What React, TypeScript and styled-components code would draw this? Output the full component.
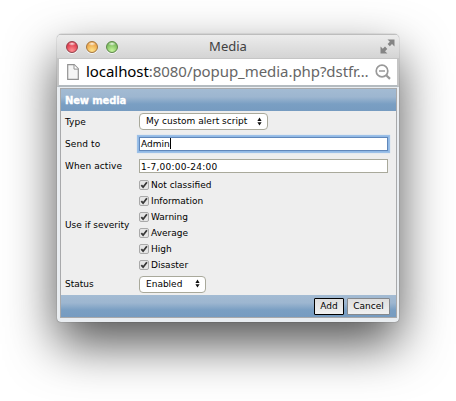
import React from "react";
import styled, { createGlobalStyle } from "styled-components";

const GlobalStyle = createGlobalStyle`
  * { box-sizing: border-box; }
  body { margin: 0; background: #fff; overflow: hidden; }
`;

const Desktop = styled.main`
  width: 456px;
  height: 401px;
  padding: 34px 0 0 57px;
  overflow: hidden;
  background: #fff;
  color: #000;
  font: 9px/16px "DejaVu Sans", Verdana, sans-serif;
`;

const Window = styled.section`
  display: flex;
  flex-direction: column;
  width: 342px;
  height: 288px;
  border-radius: 5px 5px 4px 4px;
  overflow: hidden;
  background: #e9edf1;
  box-shadow: 0 0 1px rgba(0, 0, 0, 0.65), 0 22px 50px rgba(0, 0, 0, 0.68);
`;

const TitleBar = styled.header`
  display: grid;
  grid-template-columns: 72px 1fr 72px;
  align-items: center;
  height: 24px;
  flex: none;
  padding: 0 4px 0 9px;
  border-top: 1px solid #bdbdbd;
  background: linear-gradient(#ececec, #d4d4d4);
`;

const Lights = styled.div`
  display: flex;
  gap: 8px;
`;

const Light = styled.i<{ $edge: string; $mid: string; $glow: string }>`
  width: 12px;
  height: 12px;
  border-radius: 50%;
  border: 1px solid ${(p) => p.$edge};
  background:
    radial-gradient(ellipse 4px 2px at 50% 18%, #fffd, #fff0),
    radial-gradient(circle at 50% 85%, ${(p) => p.$glow}, ${(p) => p.$mid} 75%);
  box-shadow: 0 1px 0 #f6f6f6;
`;

const Title = styled.h1`
  margin: 0 5px 2px 0;
  text-align: center;
  font: 13px/20px "Noto Sans", sans-serif;
  color: #414141;
`;

const ExpandIcon = styled.svg`
  justify-self: end;
  width: 15px;
  height: 15px;
`;

const AddressBar = styled.div`
  display: flex;
  align-items: center;
  flex: none;
  height: 29px;
  padding: 0 6px 0 8px;
  border: solid #c5c5c5;
  border-width: 1px 2px 2px;
  border-bottom-color: #b4bbc0;
  background: #fff;

  svg {
    flex: none;
  }
`;

const Url = styled.div`
  flex: 1;
  min-width: 0;
  margin: 0 0 2px 7px;
  white-space: nowrap;
  font: 15px/24px "Noto Sans", sans-serif;
  letter-spacing: -0.06px;
  color: #666;
`;

const Host = styled.span`
  color: #000;
`;

const Form = styled.form`
  display: flex;
  flex-direction: column;
  width: 337px;
  height: 230px;
  margin: 1px 0 0 3px;
  border: 1px solid #a8a9ab;
  background: #eee;
`;

const Band = styled.div`
  display: flex;
  align-items: center;
  height: 22px;
  flex: none;
  background: linear-gradient(#a3bbd3 0%, #9db6d0 36%, #7a9fc3 68%, #769bc0 100%);
`;

const Heading = styled(Band).attrs({ as: "h2" })`
  margin: 0;
  padding: 1px 0 0 4px;
  color: #fff;
  font-size: 10px;
  font-weight: bold;
  letter-spacing: -0.15px;
  -webkit-text-stroke: 0.3px #fff;
`;

const Footer = styled(Band)`
  justify-content: flex-end;
  gap: 3px;
  padding-right: 6px;
`;

const Row = styled.div<{ $h: number }>`
  display: grid;
  grid-template-columns: 74px 249px;
  align-items: center;
  height: ${(p) => p.$h}px;
  padding-left: 4px;
  flex: none;
`;

const Text = styled.span<{ $spacing?: number }>`
  white-space: nowrap;
  letter-spacing: ${(p) => p.$spacing ?? 0}px;
`;

const Select = styled.div<{ $w: number }>`
  display: flex;
  align-items: center;
  justify-content: space-between;
  width: ${(p) => p.$w}px;
  height: 17px;
  padding: 0 5px 1px 6px;
  border: 1px solid #a9a99b;
  border-radius: 4px;
  background: #fff;
`;

const Field = styled.div<{ $focus?: boolean }>`
  display: flex;
  align-items: center;
  height: 14px;
  padding: 1px 0 0 1px;
  border: 1px solid ${(p) => (p.$focus ? "#6087ba" : "#a9a99b")};
  background: #fff;
  box-shadow: ${(p) => (p.$focus ? "0 0 0 1px #91b9e5, 0 0 0 2px #9cc0e8, 0 0 1px 2px #b1cdec" : "none")};
`;

const Caret = styled.i`
  width: 1px;
  height: 11px;
  margin-top: -1px;
  background: #000;
`;

const Checks = styled.div`
  display: flex;
  flex-direction: column;
`;

const CheckLine = styled.label`
  display: flex;
  align-items: center;
  gap: 2px;
  height: 16px;
`;

const CheckIcon = styled.svg`
  width: 10px;
  height: 10px;
  flex: none;
`;

const Button = styled.button<{ $w: number; $primary?: boolean }>`
  width: ${(p) => p.$w}px;
  height: 17px;
  padding: 0;
  border: 1px solid ${(p) => (p.$primary ? "#000" : "#86898d")};
  border-radius: 1px;
  background: linear-gradient(#dedede, #f1f1f1);
  color: #000;
  font: inherit;
  line-height: 15px;
`;

const Arrows = () => (
  <svg width="5" height="9" viewBox="0 0 5 9">
    <path d="M2.5 0.6 4.6 4H.4zM2.5 8.6.4 5.2h4.2z" fill="#111" />
  </svg>
);

const Check = () => (
  <CheckIcon viewBox="0 0 10 10">
    <rect x="0.5" y="0.5" width="9" height="9" rx="1.5" fill="#e5e5e5" stroke="#a9a9a9" />
    <path d="M2.3 5.2 4.1 7.2 7.9 2.3" fill="none" stroke="#383838" strokeWidth="1.8" />
  </CheckIcon>
);

const severities = ["Not classified", "Information", "Warning", "Average", "High", "Disaster"];

export default function App() {
  return (
    <Desktop>
      <GlobalStyle />
      <Window>
        <TitleBar>
          <Lights>
            <Light $edge="#95404a" $mid="#dc3547" $glow="#ff9094" />
            <Light $edge="#a6763c" $mid="#eaa144" $glow="#ffe38b" />
            <Light $edge="#5d8848" $mid="#76b759" $glow="#c6f59d" />
          </Lights>
          <Title>Media</Title>
          <ExpandIcon viewBox="0 0 15 15">
            <path d="M7.5.5h7v7L12 5 9.8 7.2 7.6 5 9.9 2.8zM.5 7.5 2.8 9.8 5 7.6l2.3 2.3L5 12.2l2.4 2.3H.5z" fill="#858585" />
          </ExpandIcon>
        </TitleBar>
        <AddressBar>
          <svg width="12" height="16" viewBox="0 0 12 16">
            <path d="M.7.7h6.5l4.1 4.1v10.5H.7z" fill="#f5f5f5" stroke="#929292" strokeWidth="1.2" />
            <path d="M7 .9v4.2h4.1" fill="#fff" stroke="#929292" />
          </svg>
          <Url>
            <Host>localhost</Host>:8080/popup_media.php?dstfr…
          </Url>
          <svg width="16" height="16" viewBox="0 0 16 16" fill="none" stroke="#999">
            <circle cx="7" cy="7" r="5.8" strokeWidth="1.7" />
            <path d="m11.2 11.2 3.8 3.7" strokeWidth="2.2" />
            <path d="M4 7h6" strokeWidth="1.5" />
          </svg>
        </AddressBar>
        <Form>
          <Heading>New media</Heading>
          <Row $h={21}>
            <Text>Type</Text>
            <Select $w={129}>
              <Text $spacing={0.03}>My custom alert script</Text>
              <Arrows />
            </Select>
          </Row>
          <Row $h={23}>
            <Text $spacing={0.1}>Send to</Text>
            <Field $focus>
              <Text>Admin</Text>
              <Caret />
            </Field>
          </Row>
          <Row $h={22}>
            <Text $spacing={0.1}>When active</Text>
            <Field>
              <Text $spacing={0.25}>1-7,00:00-24:00</Text>
            </Field>
          </Row>
          <Row $h={96}>
            <Text>Use if severity</Text>
            <Checks>
              {severities.map((label) => (
                <CheckLine key={label}>
                  <Check />
                  <Text>{label}</Text>
                </CheckLine>
              ))}
            </Checks>
          </Row>
          <Row $h={22}>
            <Text>Status</Text>
            <Select $w={67}>
              <Text>Enabled</Text>
              <Arrows />
            </Select>
          </Row>
          <Footer>
            <Button type="button" $w={30} $primary>Add</Button>
            <Button type="button" $w={43}>Cancel</Button>
          </Footer>
        </Form>
      </Window>
    </Desktop>
  );
}
